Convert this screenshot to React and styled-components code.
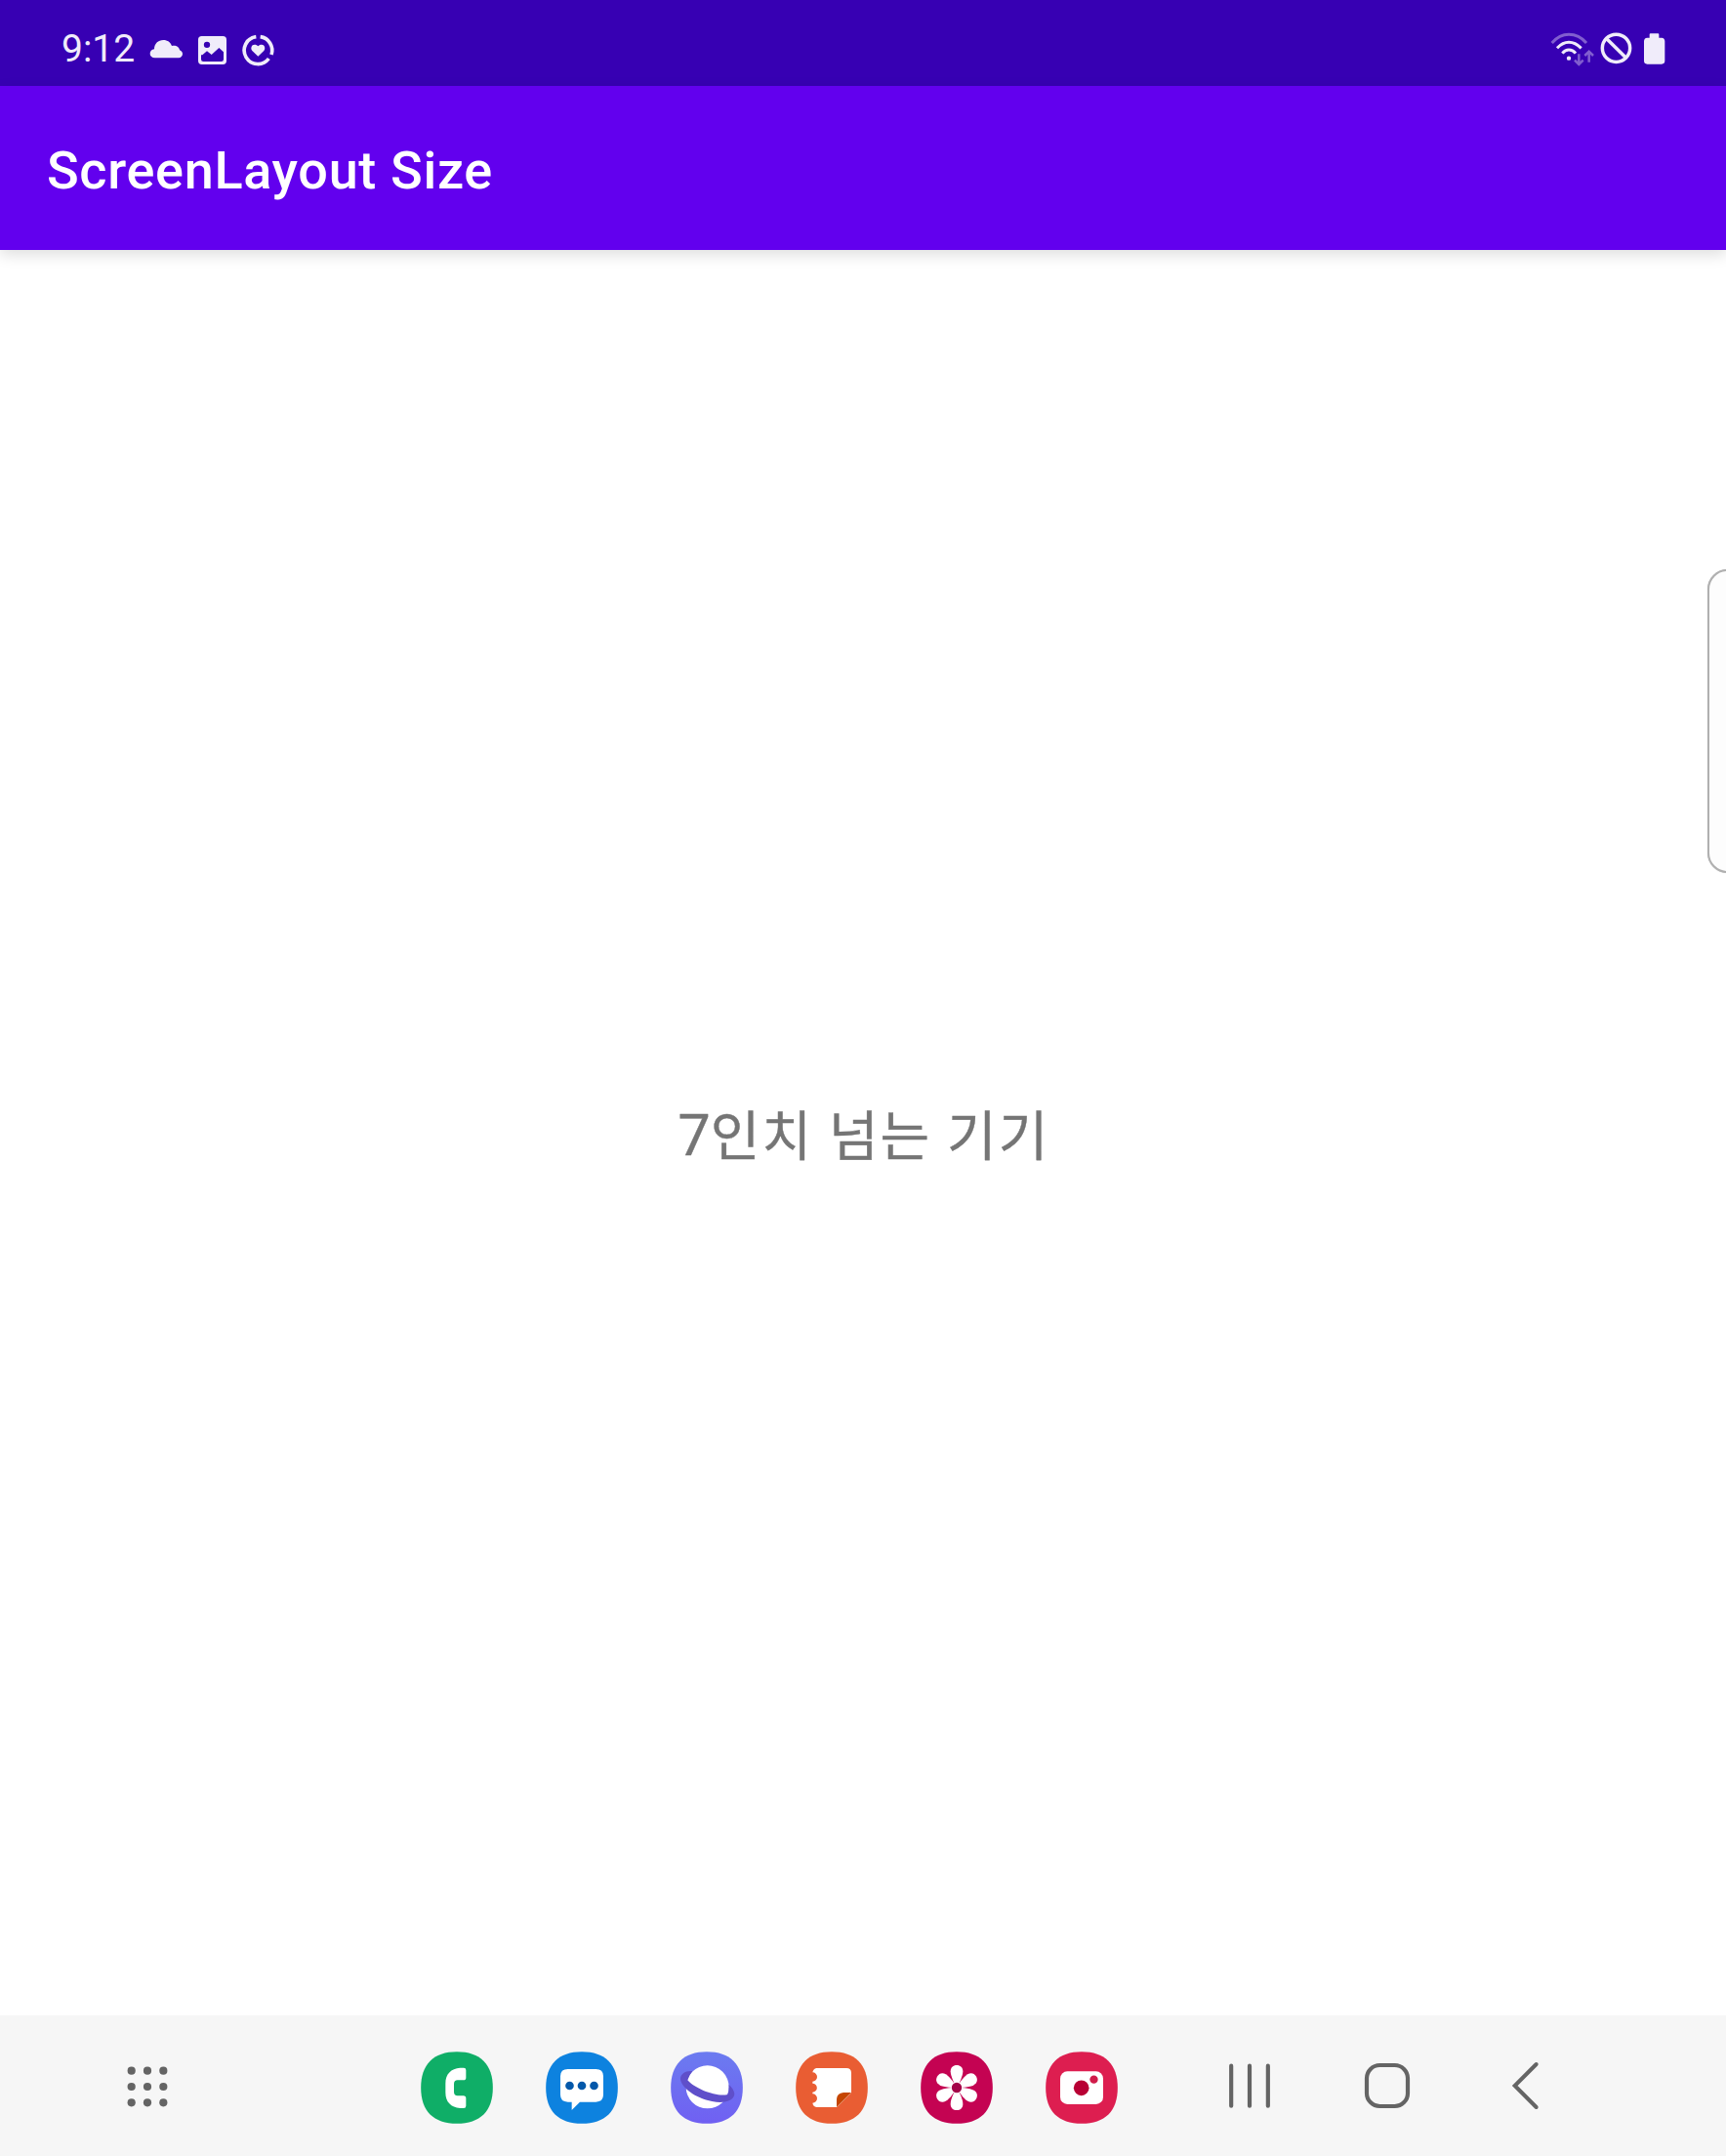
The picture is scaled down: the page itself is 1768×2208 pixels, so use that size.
import React from "react";
import styled, { createGlobalStyle } from "styled-components";

const GlobalStyle = createGlobalStyle`
  *, *::before, *::after { box-sizing: border-box; }
  body { margin: 0; overflow: hidden; background: #fff; }
`;

const Screen = styled.div`
  position: relative;
  display: flex;
  flex-direction: column;
  width: 100vw;
  height: 100vh;
  overflow: hidden;
  font-family: Roboto, "Noto Sans CJK KR", sans-serif;
`;

const StatusBar = styled.header`
  display: flex;
  align-items: center;
  justify-content: space-between;
  height: 88px;
  padding: 12px 61px 0 63px;
  background: #3700b3;
  color: #f0ecfa;
`;

const StatusGroup = styled.div`
  display: flex;
  align-items: center;
  gap: ${(p) => p.$gap}px;
`;

const Clock = styled.time`
  width: 79px;
  font-size: 39px;
  line-height: 46px;
  white-space: nowrap;
`;

const Icon = styled.svg`
  display: block;
  flex: none;
  width: ${(p) => p.$w}px;
  height: ${(p) => p.$h || p.$w}px;
  margin-left: ${(p) => p.$ml || 0}px;
  overflow: visible;
`;

const AppBar = styled.div`
  position: relative;
  z-index: 1;
  display: flex;
  align-items: center;
  height: 168px;
  padding: 6px 48px 0;
  background: #6200ee;
  box-shadow: 0 5px 14px rgba(0, 0, 0, 0.13);
`;

const Title = styled.h1`
  margin: 0;
  color: #fff;
  font-size: 54px;
  font-weight: 500;
  line-height: 64px;
  letter-spacing: 0.67px;
`;

const Content = styled.main`
  display: flex;
  flex: 1;
  align-items: center;
  justify-content: center;
  padding: 6px 0 0 2px;
  background: #fff;
`;

const Message = styled.p`
  margin: 0;
  color: #757575;
  font-size: 55px;
  line-height: 80px;
  letter-spacing: 2.1px;
  white-space: nowrap;
  -webkit-text-stroke: 0.4px #757575;
`;

const Numeral = styled.span`
  font-size: 59px;
  letter-spacing: 0;
`;

const EdgeHandle = styled.div`
  position: absolute;
  top: 583px;
  right: -22px;
  width: 41px;
  height: 311px;
  border: 2.5px solid #b0b0b0;
  border-radius: 21px;
  background: #fdfdfd;
  box-shadow: 0 0 1px #b0b0b0;
`;

const NavBar = styled.nav`
  display: flex;
  align-items: center;
  height: 144px;
  padding-left: 127px;
  background: #f6f6f6;
  color: #646464;
`;

const Dock = styled.div`
  display: flex;
  gap: 54px;
  margin: 4px 0 0 256px;
`;

const NavButtons = styled.div`
  display: flex;
  gap: 93px;
  margin-left: 111px;
`;

const TILE =
  "M111 0.5 C183 0.5 221.5 39 221.5 111 C221.5 183 183 221.5 111 221.5 C39 221.5 0.5 183 0.5 111 C0.5 39 39 0.5 111 0.5Z";

function Tile({ x, fill, children }) {
  return (
    <Icon $w={74} viewBox={`${x} 48 222 222`}>
      <path d={TILE} transform={`translate(${x} 48)`} fill={fill} />
      {children}
    </Icon>
  );
}

const PETALS = [0, 60, 120, 180, 240, 300];

export default function App() {
  return (
    <Screen>
      <GlobalStyle />
      <StatusBar>
        <StatusGroup $gap={11}>
          <Clock>9:12</Clock>
          <Icon $w={36} viewBox="339 66 108 108" fill="currentColor">
            <path d="M356 148 C347 148 341 142 341 135 C341 128 346 122 354 121 C354 104 366 93 382 93 C395 93 404 100 408 111 C420 108 431 114 432 124 C438 126 441 131 441 136 C441 143 436 148 429 148Z" />
          </Icon>
          <Icon $w={36} viewBox="480 66 108 108" fill="currentColor">
            <path
              fillRule="evenodd"
              d="M500 81 H565 Q576 81 576 92 V157 Q576 168 565 168 H500 Q489 168 489 157 V92 Q489 81 500 81Z M516 98 A9.5 9.5 0 1 0 516 117 A9.5 9.5 0 1 0 516 98Z M498 139 V152 Q498 159 505 159 H560 Q567 159 567 152 V130 L553 117 L530 138 L516 127 L502 139Z"
            />
          </Icon>
          <Icon $w={36} viewBox="621 66 108 108">
            <g fill="none" stroke="currentColor" strokeWidth="11">
              <path d="M667 83 A42 42 0 1 0 706 150" />
              <path d="M680 83 A42 42 0 0 1 714 138" />
            </g>
            <path
              fill="currentColor"
              d="M673 143 L655 126 C649 118 653 107 662 107 C667 107 671 109 673 112 C675 109 679 107 684 107 C693 107 697 118 691 126Z"
            />
          </Icon>
        </StatusGroup>
        <StatusGroup $gap={0}>
          <Icon $w={45} $h={36} viewBox="54 66 135 108" fill="none" stroke="currentColor" strokeWidth="9">
            <path opacity="0.4" d="M59 102 Q82 76 111 76 Q142 76 165 102" />
            <path d="M75 118 Q92 100 111 100 Q131 100 149 118" />
            <path d="M91 134 Q100 123 111 123 Q123 123 132 134" />
            <circle cx="111" cy="149" r="6.5" fill="currentColor" stroke="none" />
            <g opacity="0.4" strokeWidth="7.500">
              <path d="M142 136 V167 M129 155 L142 168 L155 155" />
              <path d="M173 161 V130 M160 141 L173 128 L186 141" />
            </g>
          </Icon>
          <Icon $w={36} $ml={5} viewBox="204 66 108 108" fill="none" stroke="currentColor" strokeWidth="10.500">
            <circle cx="256.500" cy="118" r="42.500" />
            <path d="M226 88 L287 148" />
          </Icon>
          <Icon $w={24} $h={36} $ml={9} viewBox="339 66 72 108" fill="currentColor">
            <path d="M362 73 H385 Q388 73 388 76 V86 H396 Q406 87 406 97 V157 Q406 167 396 167 H352 Q342 167 342 157 V97 Q342 87 352 86 H359 V76 Q359 73 362 73Z" />
          </Icon>
        </StatusGroup>
      </StatusBar>

      <AppBar>
        <Title>ScreenLayout Size</Title>
      </AppBar>

      <Content>
        <Message>
          <Numeral>7</Numeral>인치 넘는 기기
        </Message>
      </Content>

      <NavBar>
        <Icon $w={48} viewBox="81 186 144 144" fill="currentColor">
          {[212, 261, 310].map((y) =>
            [104, 153, 202].map((x) => <circle key={`${x}-${y}`} cx={x} cy={y} r="12.3" />)
          )}
        </Icon>
        <Dock>
          <Tile x={33} fill="#0fae67">
            <path
              fill="#fff"
              d="M154 98 H165 Q172 98 172 105 V128 Q172 136 164 136 H146 Q135 136 135 148 V172 Q135 184 146 184 H164 Q172 184 172 192 V215 Q172 222 165 222 H154 C126 220 109 203 109 174 V146 C109 117 126 100 154 98Z"
            />
          </Tile>
          <Tile x={417} fill="#0d82df">
            <path
              fill="#fff"
              d="M485 102 H571 Q594 102 594 124 V181 Q594 203 571 203 H522 L497 228 V203 H485 Q462 203 462 181 V124 Q462 102 485 102Z"
            />
            {[490.5, 528, 565.5].map((x) => (
              <circle key={x} cx={x} cy="153" r="13" fill="#0358aa" />
            ))}
          </Tile>
          <Tile x={36} fill="url(#planetSky)">
            <defs>
              <linearGradient id="planetSky" x1="0" y1="0" x2="0" y2="1">
                <stop offset="0" stopColor="#6b7bf0" />
                <stop offset="1" stopColor="#7060f2" />
              </linearGradient>
            </defs>
            <circle cx="149" cy="157" r="66" fill="#fff" />
            <path
              fill="#5f4fca"
              d="M103 108 C82 106 66 116 66 132 C67 158 113 192 163 201 C203 209 232 198 232 178 C231 168 225 159 215 150 Q216 169 211 180 C180 189 112 164 88 136 Q93 120 103 108Z"
            />
          </Tile>
          <Tile x={420} fill="#e95d33">
            <path
              fill="#fff"
              d="M484 99 H576 Q591 99 591 114 V175 L547 219 H484 Q474 217 472 206 A13.500 13.500 0 0 0 472 178 V173 A13.500 13.500 0 0 0 472 146 V140 A13.500 13.500 0 0 0 472 112 Q474 101 484 99Z"
            />
            <path fill="#c54500" d="M591 174 L546 219 V194 Q547 176 567 174Z" />
          </Tile>
          <Tile x={39} fill="#c40352">
            {PETALS.map((angle) => (
              <path
                key={angle}
                fill="#fff"
                transform={`rotate(${angle} 150 159)`}
                d="M150 159 L139 138 C134 126 131 117 131 109 C131 97 139 90 150 90 C161 90 169 97 169 109 C169 117 166 126 161 138Z"
              />
            ))}
            <circle cx="150" cy="159" r="19" fill="#fff" />
            <circle cx="150" cy="159" r="15.500" fill="#a40348" />
          </Tile>
          <Tile x={423} fill="#dd1e50">
            <rect x="468" y="109" width="132" height="101" rx="22" fill="#fff" />
            <circle cx="533" cy="160" r="23.500" fill="#b80034" />
            <circle cx="571.500" cy="134" r="12.500" fill="#d01b4a" />
          </Tile>
        </Dock>
        <NavButtons>
          <Icon $w={48} viewBox="78 81 144 144" stroke="currentColor" strokeWidth="12.500" strokeLinecap="round">
            <path d="M93.500 92 V215 M150 92 V215 M206.500 92 V215" />
          </Icon>
          <Icon $w={48} viewBox="501 81 144 144" fill="none" stroke="currentColor" strokeWidth="12.500">
            <rect x="510" y="90" width="126" height="126" rx="40" />
          </Icon>
          <Icon
            $w={48}
            viewBox="924 81 144 144"
            fill="none"
            stroke="currentColor"
            strokeWidth="12"
            strokeLinecap="round"
          >
            <path d="M1031 87 L965 153 L1031 219" />
          </Icon>
        </NavButtons>
      </NavBar>

      <EdgeHandle />
    </Screen>
  );
}
